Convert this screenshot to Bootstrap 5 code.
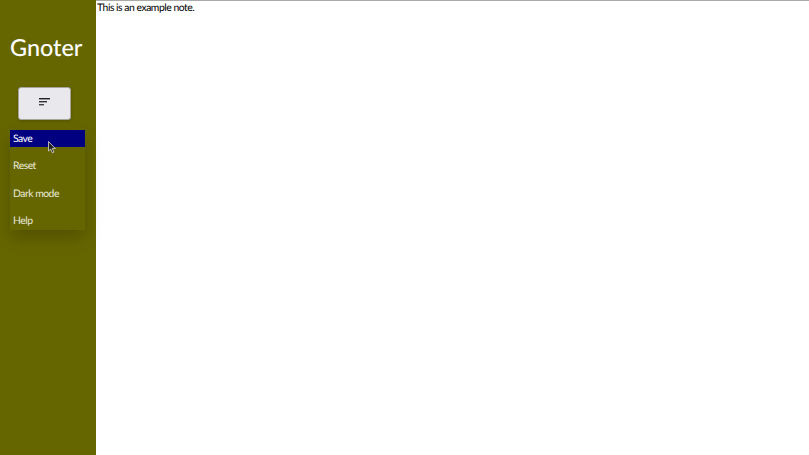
<!DOCTYPE html>
<html lang="en">
<head>
<meta charset="utf-8">
<title>Gnoter</title>
<link href="https://cdn.jsdelivr.net/npm/bootstrap@5.3.0/dist/css/bootstrap.min.css" rel="stylesheet">
<style>
html,body{height:100%;margin:0;overflow:hidden;font-family:Lato,sans-serif;background:#fff;text-rendering:geometricPrecision}
.app-shell{height:455px}
.side-bar{width:96px;background:#666600;color:#fff;padding:0 10px}
.app-title{font-size:23.4px;font-weight:500;line-height:29px;margin:33px 0 0;white-space:nowrap}
.menu-toggle{width:53px;height:33px;margin:25px 0 0 8px;padding:0 0 4px;background:#e9e9ed;border:1px solid #a5a59a;border-radius:3px;display:flex;align-items:center;justify-content:center;box-shadow:0 1px 3px rgba(0,0,0,.2)}
.menu-panel{width:75px;margin-top:10px;background:#666600;box-shadow:0 8px 16px rgba(0,0,0,.2);position:relative}
.menu-entry{display:block;height:27.4px;padding:0 3px;font-size:10.4px;letter-spacing:-.5px;line-height:18px;color:#e8e8d8;white-space:nowrap;text-decoration:none}
.menu-entry.is-active{height:17px;background:#000080;color:#fff;margin-bottom:10.4px}
.menu-entry.is-last{height:18px}
.pointer-mark{position:absolute;left:38px;top:11px}
.note-area{border-top:1px solid #a9a9a9;font-size:10.4px;letter-spacing:-.48px;line-height:15px;color:#000;padding:0 1px}
</style>
</head>
<body>
<div class="app-shell d-flex">
  <aside class="side-bar flex-shrink-0">
    <h1 class="app-title">Gnoter</h1>
    <button class="menu-toggle" type="button" aria-label="Menu">
      <svg width="11" height="8" viewBox="0 0 11 8"><rect x="0" y="0" width="11" height="1.4" fill="#222"/><rect x="0" y="3" width="8" height="1.4" fill="#333"/><rect x="0" y="6" width="5" height="1.4" fill="#444"/></svg>
    </button>
    <nav class="menu-panel">
      <a class="menu-entry is-active">Save</a>
      <a class="menu-entry">Reset</a>
      <a class="menu-entry">Dark mode</a>
      <a class="menu-entry is-last">Help</a>
      <svg class="pointer-mark" width="9" height="13" viewBox="0 0 9 13"><path d="M.5.5V10l2.2-2 1.6 3.8 1.6-.7L4.3 7.4h3z" fill="#222" stroke="#ddd" stroke-width=".8"/></svg>
    </nav>
  </aside>
  <main class="note-area flex-grow-1">This is an example note.</main>
</div>
<script src="https://cdn.jsdelivr.net/npm/bootstrap@5.3.0/dist/js/bootstrap.bundle.min.js"></script>
</body>
</html>
